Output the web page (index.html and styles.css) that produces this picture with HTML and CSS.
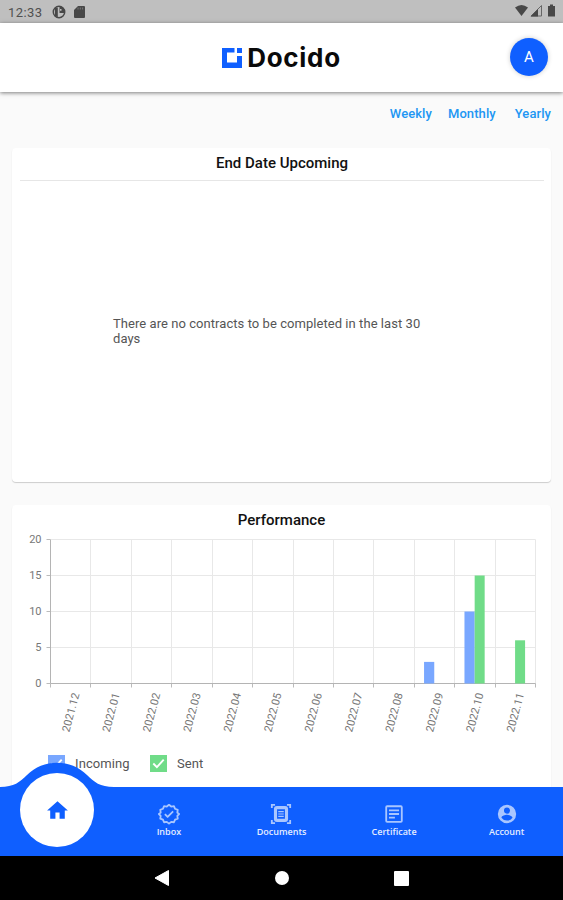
FILE: index.html
```html
<!DOCTYPE html>
<html lang="en">

<head>
    <meta charset="UTF-8">
    <meta name="viewport" content="width=device-width, initial-scale=1.0">
    <title>Docido</title>
    <link rel="stylesheet" href="styles.css">
</head>

<body>
    <div class="status-bar">
        <span class="clock">12:33</span>
        <svg class="status-dot" width="14" height="14" viewBox="0 0 14 14">
            <circle cx="7" cy="7" r="5.7" fill="none" stroke="#484848" stroke-width="1.5"/>
            <path d="M3 2.500h2.800V12L3 11z" fill="#484848"/>
            <path d="M7.500 1.500a5.500 5.500 0 0 1 5.500 5.500V8H7.500z" fill="#484848"/>
            <path d="M8 4h1.500v1.800H8z" fill="#bfbfbf"/>
        </svg>
        <svg class="status-sd" width="11" height="12" viewBox="0 0 11 12">
            <path d="M4 0h6q1 0 1 1v10q0 1-1 1H1q-1 0-1-1V4z" fill="#484848"/>
            <path d="M4 1.500v2M6.300 1.500v2M8.600 1.500v2" stroke="#777"/>
        </svg>
        <svg class="status-right" width="42" height="14" viewBox="0 0 42 14">
            <path d="M0 3.500Q6.500-1.500 13 3.500L6.500 12z" fill="#484848"/>
            <path d="M16 12L26.500 1.500V12z" fill="none" stroke="#666"/>
            <path d="M15.500 12.500L23 5v7.500z" fill="#484848"/>
            <path d="M33 2h2V.5h3V2h2v10.500h-7z" fill="#484848"/>
        </svg>
    </div>

    <header class="header">
        <div class="brand">
            <svg width="20" height="20" viewBox="0 0 20 20" fill="#0f5fff">
                <path d="M0 0h12.500v4.500H5v10h10V8h5v12H0z"/>
                <path d="M15 0h5v5h-5z"/>
            </svg>
            <span>Docido</span>
        </div>
        <div class="avatar">A</div>
    </header>

    <main class="content">
        <div class="periods">
            <a class="weekly">Weekly</a>
            <a class="monthly">Monthly</a>
            <a>Yearly</a>
        </div>

        <section class="card upcoming">
            <h2>End Date Upcoming</h2>
            <p>There are no contracts to be completed in the last 30<br>days</p>
        </section>

        <section class="card performance">
            <h2>Performance</h2>
            <svg class="chart" width="539" height="215" viewBox="12 532 539 215">
                <g id="grid"></g>
                <g id="bars"></g>
                <g id="labels"></g>
            </svg>
            <div class="legend">
                <span class="box incoming"><svg width="18" height="18" viewBox="0 0 18 18"><path d="M3.500 9l3.800 3.800L14.500 5"/></svg></span>
                <span class="incoming-text">Incoming</span>
                <span class="box sent"><svg width="18" height="18" viewBox="0 0 18 18"><path d="M3.500 9l3.800 3.800L14.500 5"/></svg></span>
                <span>Sent</span>
            </div>
        </section>
    </main>

    <nav class="tabs">
        <svg class="bump" width="120" height="26" viewBox="0 0 120 26">
            <path d="M0 26V25C14 25 20 20 27 13C43-3.500 71-3.500 87 13C94 20 100 25 114 25V26z" fill="#0f5fff"/>
        </svg>
        <div class="home">
            <svg width="25" height="25" viewBox="0 0 24 24"><path d="M10 20v-6h4v6h5v-8h3L12 3 2 12h3v8z" fill="#0f5fff"/></svg>
        </div>
        <div class="tab"></div>
        <div class="tab">
            <svg width="22" height="22" viewBox="0 0 24 24" fill="none" stroke="#a9c6ff" stroke-width="2" stroke-linejoin="round">
                <path d="M12 2l2.400 1.900 3-.4 1.200 2.800 2.900 1.200-.4 3L23 12l-1.900 2 .4 3-2.900 1.200-1.200 2.800-3-.4L12 22.500l-2.400-1.900-3 .4-1.200-2.800L2.500 17l.4-3L1 12l1.900-1.500-.4-3 2.900-1.200 1.200-2.800 3 .4z"/>
                <path d="M7.500 12.200l3 3 6-6"/>
            </svg>
            <span>Inbox</span>
        </div>
        <div class="tab">
            <svg width="22" height="22" viewBox="0 0 24 24" fill="none" stroke="#a9c6ff" stroke-width="2">
                <path d="M2 5.500V2h3.500M18.500 2H22v3.500M22 18.500V22h-3.500M5.500 22H2v-3.500"/>
                <rect x="6" y="5" width="12" height="14" rx="1.500" stroke-width="3.400"/>
                <path d="M9 9.500h6M9 12h6M9 14.500h6" stroke-width="1.300"/>
            </svg>
            <span>Documents</span>
        </div>
        <div class="tab">
            <svg width="22" height="22" viewBox="0 0 24 24" fill="none" stroke="#a9c6ff" stroke-width="2">
                <rect x="3.500" y="3.500" width="17" height="17" rx="1"/>
                <path d="M6.500 8h11M6.500 12h11M6.500 16h6.500"/>
            </svg>
            <span>Certificate</span>
        </div>
        <div class="tab">
            <svg width="22" height="22" viewBox="0 0 24 24" fill="#a9c6ff">
                <path d="M12 2a10 10 0 1 0 0 20 10 10 0 0 0 0-20zm0 3a3.300 3.300 0 1 1 0 6.600A3.300 3.300 0 0 1 12 5zm0 14.200a7.200 7.200 0 0 1-6-3.200c0-2 4-3.100 6-3.100s6 1.100 6 3.100a7.200 7.200 0 0 1-6 3.200z"/>
            </svg>
            <span>Account</span>
        </div>
    </nav>

    <div class="system-bar">
        <svg width="16" height="18" viewBox="0 0 16 18"><path d="M1 9L14.500 1.500v15z" fill="#fff" stroke="#fff" stroke-linejoin="round"/></svg>
        <span class="sys-home"></span>
        <span class="sys-recent"></span>
    </div>

    <script src="chart.js"></script>
</body>

</html>
```
FILE: styles.css
```css
* {
    box-sizing: border-box;
}

body {
    margin: 0;
    height: 900px;
    display: flex;
    flex-direction: column;
    overflow: hidden;
    background: #fafafa;
    font-family: Roboto, sans-serif;
    color: #111;
}

.status-bar {
    flex: none;
    height: 23px;
    display: flex;
    align-items: center;
    background: #bfbfbf;
    padding: 0 8px;
}

.clock {
    width: 44px;
    font-size: 13px;
    letter-spacing: 0.4px;
    color: #505050;
    padding-top: 1px;
}

.status-dot {
    margin-top: 1px;
}

.status-sd {
    margin: 1px 0 0 8px;
}

.status-right {
    margin-left: auto;
    margin-right: -2px;
    margin-top: -1px;
}

.header {
    flex: none;
    height: 69px;
    display: flex;
    justify-content: center;
    align-items: center;
    position: relative;
    z-index: 1;
    background: #fff;
    box-shadow: 0 1px 4px rgba(0, 0, 0, 0.5);
}

.brand {
    display: flex;
    align-items: center;
    gap: 5px;
    font-family: Inter, sans-serif;
    font-size: 26px;
    font-weight: 700;
    letter-spacing: 0.7px;
    color: #0a0a0a;
}

.avatar {
    position: absolute;
    right: 15px;
    top: 15px;
    width: 38px;
    height: 38px;
    border-radius: 50%;
    background: #0f5fff;
    box-shadow: 0 0 5px rgba(0, 0, 0, 0.2);
    color: #fff;
    font-size: 15px;
    line-height: 39px;
    text-align: center;
}

.content {
    flex: 1;
    min-height: 0;
    overflow: hidden;
    padding: 0 12px;
}

.periods {
    height: 56px;
    display: flex;
    justify-content: flex-end;
    padding-top: 14px;
    font-size: 13px;
    line-height: 16px;
    font-weight: 500;
    letter-spacing: 0.08px;
    color: #2196f3;
}

.weekly {
    margin-right: 16px;
}

.monthly {
    margin-right: 19px;
}

.card {
    background: #fff;
    border-radius: 4px;
    box-shadow: 0 1px 1px rgba(0, 0, 0, 0.18);
}

.card h2 {
    margin: 0;
    font-size: 15px;
    line-height: 18px;
    font-weight: 500;
    text-align: center;
}

.upcoming {
    height: 334px;
    padding: 6px 7px 6px 8px;
}

.upcoming h2 {
    height: 27px;
    border-bottom: 1px solid #e6e6e6;
}

.upcoming p {
    margin: 135px 0 0 93px;
    font-size: 13px;
    line-height: 15px;
    letter-spacing: 0.055px;
    color: #555;
    white-space: nowrap;
}

.performance {
    height: 320px;
    margin-top: 23px;
    padding-top: 6px;
}

.chart {
    display: block;
    margin-top: 3px;
    font-size: 11px;
    fill: #777;
}

.legend {
    display: flex;
    align-items: center;
    height: 18px;
    margin-top: 7px;
    padding-left: 36px;
    font-size: 13px;
    letter-spacing: 0.1px;
    color: #555;
}

.box {
    width: 17px;
    height: 17px;
    margin-right: 10px;
}

.box svg {
    display: block;
    width: 17px;
    height: 17px;
    fill: none;
    stroke: #fff;
    stroke-width: 2;
}

.incoming {
    background: #79a7ff;
}

.sent {
    background: #70dc88;
}

.incoming-text {
    width: 75px;
}

.tabs {
    flex: none;
    height: 69px;
    display: flex;
    position: relative;
    background: #0f5fff;
}

.bump {
    position: absolute;
    left: 0;
    top: -25px;
}

.home {
    position: absolute;
    left: 20px;
    top: -14px;
    width: 74px;
    height: 74px;
    border-radius: 50%;
    background: #fff;
    display: flex;
    align-items: center;
    justify-content: center;
}

.tab {
    flex: 1;
    display: flex;
    flex-direction: column;
    align-items: center;
    padding-top: 16px;
    font-family: "Open Sans", sans-serif;
    font-size: 9px;
    line-height: 12px;
    font-weight: 600;
    color: #e4edff;
}

.tab span {
    margin-top: 1px;
}

.system-bar {
    flex: none;
    height: 44px;
    display: flex;
    align-items: center;
    background: #000;
    padding-left: 154px;
}

.sys-home {
    width: 14px;
    height: 14px;
    margin-left: 105px;
    border-radius: 50%;
    background: #fff;
}

.sys-recent {
    width: 15px;
    height: 15px;
    margin-left: 105px;
    border-radius: 1px;
    background: #fff;
}
```
FILE: chart.js
```js
const months = ['2021.12', '2022.01', '2022.02', '2022.03', '2022.04', '2022.05',
    '2022.06', '2022.07', '2022.08', '2022.09', '2022.10', '2022.11'];
const incoming = [0, 0, 0, 0, 0, 0, 0, 0, 0, 3, 10, 0];
const sent = [0, 0, 0, 0, 0, 0, 0, 0, 0, 0, 15, 6];

const left = 50.5, right = 535.5, top0 = 539.5, bottom = 683.5;
const step = (right - left) / months.length;
const unit = (bottom - top0) / 20;

let grid = '', bars = '', labels = '';

for (let v = 0; v <= 20; v += 5) {
    const y = bottom - v * unit;
    grid += `<path d="M${left} ${y}H${right}" stroke="#e8e8e8"/>`;
    grid += `<path d="M${left - 4} ${y}H${left}" stroke="#bbb"/>`;
    labels += `<text x="41.500" y="${y + 3.5}" text-anchor="end">${v}</text>`;
}

for (let i = 0; i <= months.length; i++) {
    const x = Math.floor(left + i * step) + 0.5;
    grid += `<path d="M${x} ${top0}V${bottom}" stroke="#e8e8e8"/>`;
    grid += `<path d="M${x} ${bottom}v4" stroke="#bbb"/>`;
}
grid += `<path d="M${left} ${top0}V${bottom}H${right}" fill="none" stroke="#b4b4b4"/>`;

months.forEach((month, i) => {
    const x = left + i * step;
    bars += `<rect x="${x + 9.8}" y="${bottom - incoming[i] * unit}" width="10.200" height="${incoming[i] * unit}" fill="#79a7ff"/>`;
    bars += `<rect x="${x + 20}" y="${bottom - sent[i] * unit}" width="10" height="${sent[i] * unit}" fill="#70dc88"/>`;
    labels += `<text transform="translate(${x + 29} 694) rotate(-75)" text-anchor="end">${month}</text>`;
});

document.getElementById('grid').innerHTML = grid;
document.getElementById('bars').innerHTML = bars;
document.getElementById('labels').innerHTML = labels;
```
